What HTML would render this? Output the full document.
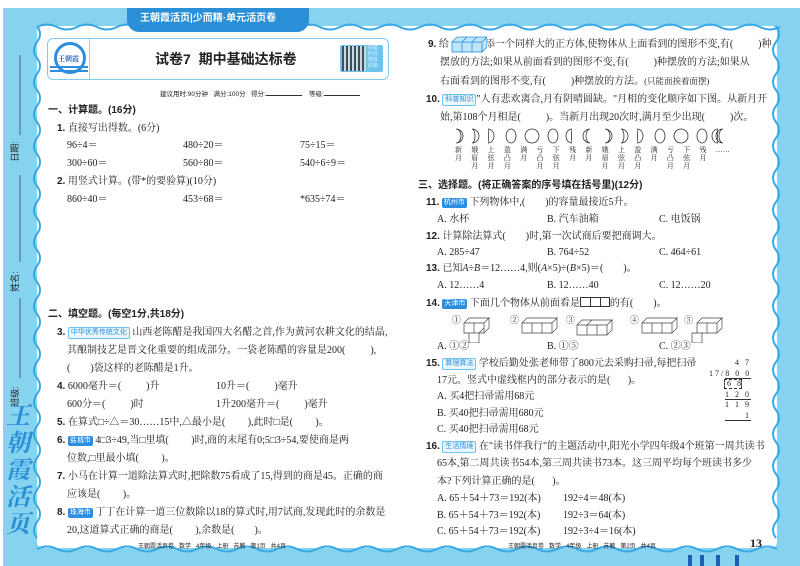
<!DOCTYPE html>
<html><head><meta charset="utf-8"><style>
*{margin:0;padding:0;box-sizing:border-box}
body{width:800px;height:566px;position:relative;overflow:hidden;background:#fff;font-family:"Liberation Serif","Noto Serif CJK SC",serif;color:#222}
.t{position:absolute;white-space:nowrap;font-size:10px;line-height:12px}
.h{font-family:"Liberation Sans","Noto Sans CJK SC",sans-serif;font-weight:bold;font-size:10px}
.n{font-family:"Liberation Sans","Noto Sans CJK SC",sans-serif;font-weight:bold}
.tag{display:inline-block;font-family:"Liberation Sans","Noto Sans CJK SC",sans-serif;font-size:7px;line-height:10px;padding:0 2px;border-radius:2px;background:#2d8ee0;color:#fff;vertical-align:1px}
.tag2{background:#e8f6fd;color:#2d8ee0;border:1px solid #6cc4ee}
.v{position:absolute;transform:rotate(-90deg);font-family:"Liberation Sans","Noto Sans CJK SC",sans-serif;font-size:9px;white-space:nowrap}
.s{font-size:7px;font-family:"Liberation Sans","Noto Sans CJK SC",sans-serif}
</style></head><body>
<div style="position:absolute;left:3px;top:8px;width:797px;height:558px;background:#86d3ef"></div>
<div style="position:absolute;left:37px;top:26px;width:740px;height:522px;background:#fff;border-radius:6px"></div>
<svg style="position:absolute;left:0;top:0" width="800" height="566">
<path d="M37 26 q6 8 0 16 q-6 8 0 16 q6 8 0 16 q-6 8 0 16 q6 8 0 16 q-6 8 0 16 q6 8 0 16 q-6 8 0 16 q6 8 0 16 q-6 8 0 16 q6 8 0 16 q-6 8 0 16 q6 8 0 16 q-6 8 0 16 q6 8 0 16 q-6 8 0 16 q6 8 0 16 q-6 8 0 16 q6 8 0 16 q-6 8 0 16 q6 8 0 16 q-6 8 0 16 q6 8 0 16 q-6 8 0 16 q6 8 0 16 q-6 8 0 16 q6 8 0 16 q-6 8 0 16 q6 8 0 16 q-6 8 0 16 q6 8 0 16 q-6 8 0 16" fill="none" stroke="#3aa8e6" stroke-width="2"/>
<path d="M776 26 q6 8 0 16 q-6 8 0 16 q6 8 0 16 q-6 8 0 16 q6 8 0 16 q-6 8 0 16 q6 8 0 16 q-6 8 0 16 q6 8 0 16 q-6 8 0 16 q6 8 0 16 q-6 8 0 16 q6 8 0 16 q-6 8 0 16 q6 8 0 16 q-6 8 0 16 q6 8 0 16 q-6 8 0 16 q6 8 0 16 q-6 8 0 16 q6 8 0 16 q-6 8 0 16 q6 8 0 16 q-6 8 0 16 q6 8 0 16 q-6 8 0 16 q6 8 0 16 q-6 8 0 16 q6 8 0 16 q-6 8 0 16 q6 8 0 16 q-6 8 0 16" fill="none" stroke="#3aa8e6" stroke-width="2"/>
<path d="M37 27 q10 -5 20 0 q10 5 20 0 q10 -5 20 0 q10 5 20 0 q10 -5 20 0 M300 27 q10 -5 20 0 q10 5 20 0 q10 -5 20 0 q10 5 20 0 q10 -5 20 0 q10 5 20 0 q10 -5 20 0 q10 5 20 0 q10 -5 20 0 q10 5 20 0 q10 -5 20 0 q10 5 20 0 q10 -5 20 0 q10 5 20 0 q10 -5 20 0 q10 5 20 0 q10 -5 20 0 q10 5 20 0 q10 -5 20 0 q10 5 20 0 q10 -5 20 0 q10 5 20 0 q10 -5 20 0 q10 5 20 0" fill="none" stroke="#3aa8e6" stroke-width="2"/>
<path d="M37 549 q10 -5 20 0 q10 5 20 0 q10 -5 20 0 q10 5 20 0 q10 -5 20 0 q10 5 20 0 q10 -5 20 0 q10 5 20 0 q10 -5 20 0 q10 5 20 0 q10 -5 20 0 q10 5 20 0 q10 -5 20 0 q10 5 20 0 q10 -5 20 0 q10 5 20 0 q10 -5 20 0 q10 5 20 0 q10 -5 20 0 q10 5 20 0 q10 -5 20 0 q10 5 20 0 q10 -5 20 0 q10 5 20 0 q10 -5 20 0 q10 5 20 0 q10 -5 20 0 q10 5 20 0 q10 -5 20 0 q10 5 20 0 q10 -5 20 0 q10 5 20 0 q10 -5 20 0 q10 5 20 0 q10 -5 20 0 q10 5 20 0 q10 -5 20 0" fill="none" stroke="#3aa8e6" stroke-width="2"/>
<line x1="20" y1="55" x2="20" y2="135" stroke="#333" stroke-width=".7"/>
<line x1="20" y1="175" x2="20" y2="262" stroke="#333" stroke-width=".7"/>
<line x1="20" y1="298" x2="20" y2="378" stroke="#333" stroke-width=".7"/>
<rect x="688" y="555" width="4" height="11" fill="#1b5fb5"/><rect x="700" y="555" width="4" height="11" fill="#1b5fb5"/><rect x="716" y="555" width="4" height="11" fill="#1b5fb5"/><rect x="735" y="555" width="4" height="11" fill="#1b5fb5"/>
</svg>
<div style="position:absolute;left:127px;top:8px;width:182px;height:24px;background:#2a8fd6;border-radius:0 0 12px 12px"></div>
<div class="t" style="left:140px;top:13px;color:#fff;font-family:'Liberation Sans','Noto Sans CJK SC',sans-serif;font-weight:bold;font-size:10px">王朝霞活页|少而精·单元活页卷</div>
<div class="v" style="left:4px;top:145px">日期:</div>
<div class="v" style="left:4px;top:275px">姓名:</div>
<div class="v" style="left:4px;top:390px">班级:</div>
<div style="position:absolute;left:4px;top:400px;width:28px;font-family:'Noto Serif CJK SC',serif;font-weight:bold;color:#2a8fd6;font-size:24px;line-height:27px;text-align:center;font-style:italic">王<br>朝<br>霞<br>活<br>页</div>
<div style="position:absolute;left:47px;top:38px;width:342px;height:42px;border:1.5px solid #7fcdee;border-radius:6px;background:#fff"></div>
<div style="position:absolute;left:89px;top:39px;width:1px;height:40px;background:#9bd6f0"></div>
<div style="position:absolute;left:54px;top:42px;width:32px;height:32px;border-radius:50%;border:3px solid #2d8ee0;background:#fff"></div>
<div class="t" style="left:58px;top:53px;font-size:7px;color:#1b5fb5;font-weight:bold">王朝霞</div>
<div style="position:absolute;left:50px;top:66px;width:38px;height:6px;border-top:2px solid #2d8ee0;border-bottom:2px solid #2d8ee0"></div>
<div class="t n" style="left:155px;top:51px;font-size:14px;line-height:16px">试卷7&nbsp;&nbsp;期中基础达标卷</div>
<div style="position:absolute;left:340px;top:45px;width:43px;height:27px;background:#6cc4ee;border-radius:2px"></div>
<div style="position:absolute;left:342px;top:46px;width:24px;height:25px;background:repeating-linear-gradient(90deg,#333 0 2px,#ddd 2px 4px),#333;opacity:.8"></div>
<div class="t" style="left:368px;top:46px;font-size:5px;line-height:6px;color:#fff">拍错<br>照看<br>批改<br>改错</div>
<div class="t s" style="left:160px;top:89px;font-size:6.5px">建议用时:90分钟&nbsp;&nbsp;&nbsp;满分:100分&nbsp;&nbsp;&nbsp;得分:<span style="display:inline-block;width:36px;border-bottom:.6px solid #333"></span>&nbsp;&nbsp;&nbsp;&nbsp;等级:<span style="display:inline-block;width:36px;border-bottom:.6px solid #333"></span></div>
<div class="t h" style="left:48px;top:105px">一、计算题。(16分)</div>
<div class="t" style="left:57px;top:123px"><span class="n">1.</span> 直接写出得数。(6分)</div>
<div class="t" style="left:67px;top:140px">96÷4＝</div><div class="t" style="left:183px;top:140px">480÷20＝</div><div class="t" style="left:300px;top:140px">75÷15＝</div>
<div class="t" style="left:67px;top:158px">300÷60＝</div><div class="t" style="left:183px;top:158px">560÷80＝</div><div class="t" style="left:300px;top:158px">540÷6÷9＝</div>
<div class="t" style="left:57px;top:176px"><span class="n">2.</span> 用竖式计算。(带*的要验算)(10分)</div>
<div class="t" style="left:67px;top:194px">860÷40＝</div><div class="t" style="left:183px;top:194px">453÷68＝</div><div class="t" style="left:300px;top:194px">*635÷74＝</div>
<div class="t h" style="left:48px;top:309px">二、填空题。(每空1分,共18分)</div>
<div class="t" style="left:57px;top:327px"><span class="n">3.</span> <span class="tag tag2">中华优秀传统文化</span> 山西老陈醋是我国四大名醋之首,作为黄河农耕文化的结晶,</div>
<div class="t" style="left:67px;top:345px">其酿制技艺是晋文化重要的组成部分。一袋老陈醋的容量是200(&nbsp;&nbsp;&nbsp;&nbsp;&nbsp;&nbsp;&nbsp;&nbsp;&nbsp;&nbsp;),</div>
<div class="t" style="left:67px;top:363px">(&nbsp;&nbsp;&nbsp;&nbsp;&nbsp;&nbsp;&nbsp;&nbsp;)袋这样的老陈醋是1升。</div>
<div class="t" style="left:57px;top:381px"><span class="n">4.</span> 6000毫升＝(&nbsp;&nbsp;&nbsp;&nbsp;&nbsp;&nbsp;&nbsp;&nbsp;&nbsp;&nbsp;)升</div><div class="t" style="left:216px;top:381px">10升＝(&nbsp;&nbsp;&nbsp;&nbsp;&nbsp;&nbsp;&nbsp;&nbsp;&nbsp;&nbsp;)毫升</div>
<div class="t" style="left:67px;top:399px">600分＝(&nbsp;&nbsp;&nbsp;&nbsp;&nbsp;&nbsp;&nbsp;&nbsp;&nbsp;&nbsp;)时</div><div class="t" style="left:216px;top:399px">1升200毫升＝(&nbsp;&nbsp;&nbsp;&nbsp;&nbsp;&nbsp;&nbsp;&nbsp;&nbsp;&nbsp;)毫升</div>
<div class="t" style="left:57px;top:417px"><span class="n">5.</span> 在算式□÷△＝30……15中,△最小是(&nbsp;&nbsp;&nbsp;&nbsp;&nbsp;&nbsp;&nbsp;&nbsp;&nbsp;),此时□是(&nbsp;&nbsp;&nbsp;&nbsp;&nbsp;&nbsp;&nbsp;&nbsp;&nbsp;)。</div>
<div class="t" style="left:57px;top:435px"><span class="n">6.</span> <span class="tag">盐城市</span> 4□3÷49,当□里填(&nbsp;&nbsp;&nbsp;&nbsp;&nbsp;&nbsp;&nbsp;&nbsp;&nbsp;)时,商的末尾有0;5□3÷54,要使商是两</div>
<div class="t" style="left:67px;top:453px">位数,□里最小填(&nbsp;&nbsp;&nbsp;&nbsp;&nbsp;&nbsp;&nbsp;&nbsp;&nbsp;)。</div>
<div class="t" style="left:57px;top:471px"><span class="n">7.</span> 小马在计算一道除法算式时,把除数75看成了15,得到的商是45。正确的商</div>
<div class="t" style="left:67px;top:489px">应该是(&nbsp;&nbsp;&nbsp;&nbsp;&nbsp;&nbsp;&nbsp;&nbsp;&nbsp;)。</div>
<div class="t" style="left:57px;top:507px"><span class="n">8.</span> <span class="tag">珠海市</span> 丁丁在计算一道三位数除以18的算式时,用7试商,发现此时的余数是</div>
<div class="t" style="left:67px;top:525px">20,这道算式正确的商是(&nbsp;&nbsp;&nbsp;&nbsp;&nbsp;&nbsp;&nbsp;&nbsp;&nbsp;),余数是(&nbsp;&nbsp;&nbsp;&nbsp;&nbsp;&nbsp;&nbsp;&nbsp;)。</div>
<div class="t s" style="left:138px;top:541px;font-size:6px">王朝霞活页卷&nbsp;&nbsp;&nbsp;数学&nbsp;&nbsp;&nbsp;4年级&nbsp;&nbsp;&nbsp;上册&nbsp;&nbsp;&nbsp;苏教&nbsp;&nbsp;&nbsp;第1页&nbsp;&nbsp;&nbsp;共4页</div>
<div class="t" style="left:428px;top:39px"><span class="n">9.</span> 给<span style="display:inline-block;width:36px"></span>添一个同样大的正方体,使物体从上面看到的图形不变,有(&nbsp;&nbsp;&nbsp;&nbsp;&nbsp;&nbsp;&nbsp;&nbsp;&nbsp;&nbsp;)种</div>
<svg style="position:absolute;left:451px;top:36px" width="36" height="18"><g fill="#bfe6f8" stroke="#2d8ee0" stroke-width=".8"><rect x="1" y="6" width="30" height="10"/><path d="M1 6 l5 -5 h30 l-5 5z M31 6 l5 -5 v10 l-5 5z"/><path d="M11 6 v10 M21 6 v10 M11 6 l5 -5 M21 6 l5 -5" fill="none"/></g></svg>
<div class="t" style="left:440px;top:57px">摆放的方法;如果从前面看到的图形不变,有(&nbsp;&nbsp;&nbsp;&nbsp;&nbsp;&nbsp;&nbsp;&nbsp;&nbsp;&nbsp;)种摆放的方法;如果从</div>
<div class="t" style="left:440px;top:75px">右面看到的图形不变,有(&nbsp;&nbsp;&nbsp;&nbsp;&nbsp;&nbsp;&nbsp;&nbsp;&nbsp;&nbsp;)种摆放的方法。<span style="font-size:8.5px">(只能面挨着面摆)</span></div>
<div class="t" style="left:426px;top:94px"><span class="n">10.</span> <span class="tag tag2">科普知识</span>"人有悲欢离合,月有阴晴圆缺。"月相的变化顺序如下图。从新月开</div>
<div class="t" style="left:440px;top:112px">始,第108个月相是(&nbsp;&nbsp;&nbsp;&nbsp;&nbsp;&nbsp;&nbsp;&nbsp;&nbsp;&nbsp;)。当新月出现20次时,满月至少出现(&nbsp;&nbsp;&nbsp;&nbsp;&nbsp;&nbsp;&nbsp;&nbsp;&nbsp;&nbsp;)次。</div>
<svg style="position:absolute;left:452px;top:127px" width="270" height="18"><g fill="none" stroke="#333" stroke-width=".8">
<path d="M4 2 a7 7 0 0 1 0 14 a5 7 0 0 0 0 -14z"/><path d="M20 2 a7 7 0 0 1 0 14 a3 7 0 0 0 0 -14z"/><path d="M36 2 a6 7 0 0 1 0 14 a0.5 7 0 0 0 0 -14z"/><ellipse cx="59" cy="9" rx="5" ry="7"/><ellipse cx="80" cy="9" rx="7" ry="7"/><ellipse cx="101" cy="9" rx="5" ry="7"/><path d="M120 2 a6 7 0 0 0 0 14 a0.5 7 0 0 1 0 -14z"/><path d="M138 2 a7 7 0 0 0 0 14 a4 7 0 0 1 0 -14z"/>
<path d="M153 2 a7 7 0 0 1 0 14 a5 7 0 0 0 0 -14z"/><path d="M169 2 a7 7 0 0 1 0 14 a3 7 0 0 0 0 -14z"/><path d="M185 2 a6 7 0 0 1 0 14 a0.5 7 0 0 0 0 -14z"/><ellipse cx="208" cy="9" rx="5" ry="7"/><ellipse cx="229" cy="9" rx="7" ry="7"/><ellipse cx="250" cy="9" rx="5" ry="7"/><path d="M266 2 a6 7 0 0 0 0 14 a0.5 7 0 0 1 0 -14z"/></g></svg>
<svg style="position:absolute;left:713px;top:127px" width="14" height="18"><path d="M10 2 a7 7 0 0 0 0 14 a4 7 0 0 1 0 -14z" fill="none" stroke="#333" stroke-width=".8"/></svg>
<div class="t" style="left:455px;top:146px;font-size:7px;line-height:8px;display:flex;gap:9.3px">
<span>新<br>月</span><span>娥<br>眉<br>月</span><span>上<br>弦<br>月</span><span>盈<br>凸<br>月</span><span>满<br>月</span><span>亏<br>凸<br>月</span><span>下<br>弦<br>月</span><span>残<br>月</span><span>新<br>月</span><span>娥<br>眉<br>月</span><span>上<br>弦<br>月</span><span>盈<br>凸<br>月</span><span>满<br>月</span><span>亏<br>凸<br>月</span><span>下<br>弦<br>月</span><span>残<br>月</span><span>……</span></div>
<div class="t h" style="left:418px;top:180px">三、选择题。(将正确答案的序号填在括号里)(12分)</div>
<div class="t" style="left:426px;top:197px"><span class="n">11.</span> <span class="tag">杭州市</span> 下列物体中,(&nbsp;&nbsp;&nbsp;&nbsp;&nbsp;&nbsp;&nbsp;&nbsp;)的容量最接近5升。</div>
<div class="t" style="left:437px;top:214px">A. 水杯</div><div class="t" style="left:547px;top:214px">B. 汽车油箱</div><div class="t" style="left:659px;top:214px">C. 电饭锅</div>
<div class="t" style="left:426px;top:231px"><span class="n">12.</span> 计算除法算式(&nbsp;&nbsp;&nbsp;&nbsp;&nbsp;&nbsp;&nbsp;&nbsp;)时,第一次试商后要把商调大。</div>
<div class="t" style="left:437px;top:247px">A. 285÷47</div><div class="t" style="left:547px;top:247px">B. 764÷52</div><div class="t" style="left:659px;top:247px">C. 464÷61</div>
<div class="t" style="left:426px;top:263px"><span class="n">13.</span> 已知<i>A</i>÷<i>B</i>＝12……4,则(<i>A</i>×5)÷(<i>B</i>×5)＝(&nbsp;&nbsp;&nbsp;&nbsp;&nbsp;&nbsp;&nbsp;&nbsp;)。</div>
<div class="t" style="left:437px;top:280px">A. 12……4</div><div class="t" style="left:547px;top:280px">B. 12……40</div><div class="t" style="left:659px;top:280px">C. 12……20</div>
<div class="t" style="left:426px;top:297px"><span class="n">14.</span> <span class="tag">天津市</span> 下面几个物体从前面看是<span style="display:inline-block;width:30px;height:10px;border:.8px solid #333;vertical-align:-1px;background:linear-gradient(90deg,transparent 9px,#333 9px,#333 10px,transparent 10px,transparent 19px,#333 19px,#333 20px,transparent 20px)"></span>的有(&nbsp;&nbsp;&nbsp;&nbsp;&nbsp;&nbsp;&nbsp;&nbsp;)。</div>
<svg style="position:absolute;left:452px;top:313px" width="280" height="30"><g fill="none" stroke="#444" stroke-width=".7">
<text x="0" y="10" font-size="9" fill="#333" stroke="none">①</text><path d="M12 10 h20 v10 h-20z M12 10 l5 -5 h20 l-5 5 M32 10 l5 -5 v10 l-5 5 M22 10 v10 M17 20 h10 v10 h-10z M27 20 l5 -5"/>
<text x="58" y="10" font-size="9" fill="#333" stroke="none">②</text><path d="M70 10 h30 v10 h-30z M70 10 l5 -5 h30 l-5 5 M100 10 l5 -5 v10 l-5 5 M80 10 v10 M90 10 v10"/>
<text x="114" y="10" font-size="9" fill="#333" stroke="none">③</text><path d="M125 12 h30 v10 h-30z M135 12 l5 -5 h20 l-5 5 M155 12 l5 -5 v10 l-5 5 M135 12 v10 M145 12 v10 M125 12 l5 -5 h10"/>
<text x="178" y="10" font-size="9" fill="#333" stroke="none">④</text><path d="M190 10 h30 v10 h-30z M190 10 l5 -5 h30 l-5 5 M220 10 l5 -5 v10 l-5 5 M200 10 v10 M210 10 v10"/>
<text x="232" y="10" font-size="9" fill="#333" stroke="none">⑤</text><path d="M245 10 h20 v10 h-20z M245 10 l5 -5 h20 l-5 5 M265 10 l5 -5 v10 l-5 5 M255 10 v10 M240 20 h10 v10 h-10z"/></g></svg>
<div class="t" style="left:437px;top:341px">A. ①②</div><div class="t" style="left:547px;top:341px">B. ①⑤</div><div class="t" style="left:659px;top:341px">C. ②③</div>
<div class="t" style="left:426px;top:358px"><span class="n">15.</span> <span class="tag tag2">算理算法</span> 学校后勤处张老师带了800元去采购扫帚,每把扫帚</div>
<div class="t" style="left:437px;top:375px">17元。竖式中虚线框内的部分表示的是(&nbsp;&nbsp;&nbsp;&nbsp;&nbsp;&nbsp;&nbsp;)。</div>
<div class="t" style="left:437px;top:391px">A. 买4把扫帚需用68元</div>
<div class="t" style="left:437px;top:408px">B. 买40把扫帚需用680元</div>
<div class="t" style="left:437px;top:424px">C. 买40把扫帚需用68元</div>
<div class="t" style="left:709px;top:358px;font-size:8px;line-height:10.5px;letter-spacing:2px;text-align:right;width:42px">4 7<br>17/8 0 0<br>6 8&nbsp;&nbsp;<br>1 2 0<br>1 1 9<br>1</div>
<div style="position:absolute;left:725px;top:378px;width:26px;border-top:.7px solid #333"></div>
<div style="position:absolute;left:725px;top:399px;width:26px;border-top:.7px solid #333"></div>
<div style="position:absolute;left:725px;top:420px;width:26px;border-top:.7px solid #333"></div>
<div style="position:absolute;left:724px;top:379px;width:18px;height:10px;border:.7px dashed #333"></div>
<div class="t" style="left:426px;top:441px"><span class="n">16.</span> <span class="tag tag2">生活情境</span> 在"读书伴我行"的主题活动中,阳光小学四年级4个班第一周共读书</div>
<div class="t" style="left:437px;top:458px">65本,第二周共读书54本,第三周共读书73本。这三周平均每个班读书多少</div>
<div class="t" style="left:437px;top:476px">本?下列计算正确的是(&nbsp;&nbsp;&nbsp;&nbsp;&nbsp;&nbsp;&nbsp;)。</div>
<div class="t" style="left:437px;top:493px">A. 65＋54＋73＝192(本)</div><div class="t" style="left:563px;top:493px">192÷4＝48(本)</div>
<div class="t" style="left:437px;top:510px">B. 65＋54＋73＝192(本)</div><div class="t" style="left:563px;top:510px">192÷3＝64(本)</div>
<div class="t" style="left:437px;top:526px">C. 65＋54＋73＝192(本)</div><div class="t" style="left:563px;top:526px">192÷3÷4＝16(本)</div>
<div class="t s" style="left:508px;top:541px;font-size:6px">王朝霞活页卷&nbsp;&nbsp;&nbsp;数学&nbsp;&nbsp;&nbsp;4年级&nbsp;&nbsp;&nbsp;上册&nbsp;&nbsp;&nbsp;苏教&nbsp;&nbsp;&nbsp;第2页&nbsp;&nbsp;&nbsp;共4页</div>
<div class="t n" style="left:750px;top:537px;font-size:12px;font-family:'Liberation Serif',serif">13</div>
</body></html>
